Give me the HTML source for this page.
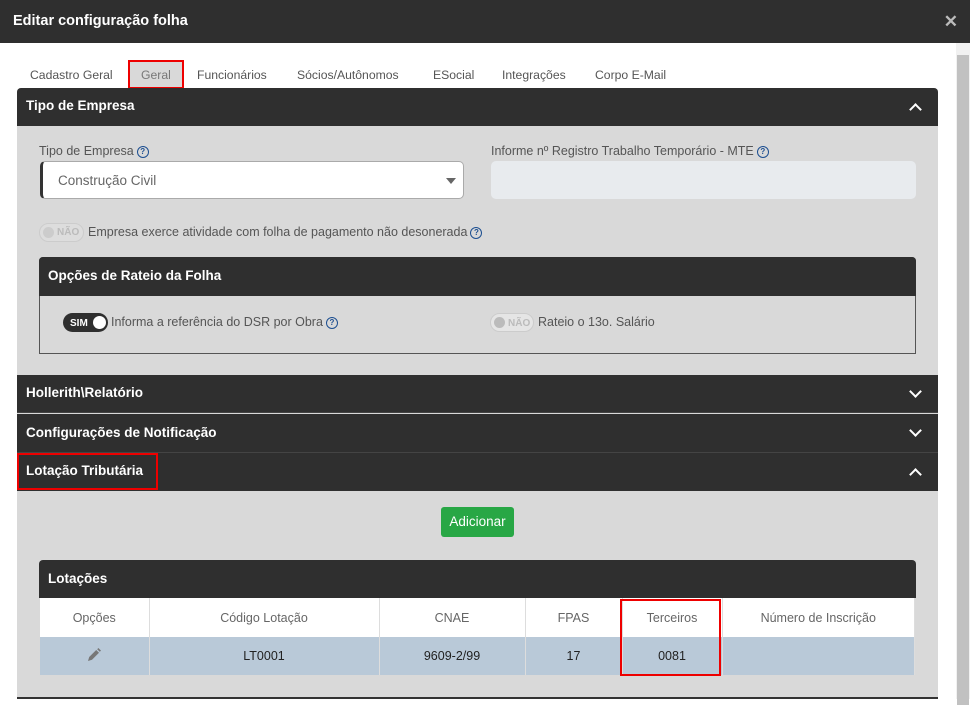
<!DOCTYPE html><html><head><meta charset="utf-8"><style>
*{box-sizing:border-box;margin:0;padding:0}
body{width:970px;height:699px;overflow:hidden;background:#fff;font-family:"Liberation Sans",Arial,sans-serif;position:relative;font-size:12.5px;color:#555}
.a{position:absolute}
.hdr{background:#2f2f2f;color:#fff;font-weight:bold}
.q{display:inline-block;width:12px;height:12px;border:1.3px solid #1d4f91;border-radius:50%;font-size:8px;line-height:9px;text-align:center;color:#1d4f91;font-weight:bold;vertical-align:middle;margin-left:3px}
.chev{position:absolute;right:18px;top:14px;width:9px;height:9px;border-left:2.5px solid #fff;border-top:2.5px solid #fff}
.up{transform:rotate(45deg);top:17px}
.dn{transform:rotate(225deg);top:12px}
.tog{position:absolute;height:19px;border-radius:10px;font-size:10px;font-weight:bold}
td,th{border-right:1px solid #ddd;text-align:center;font-weight:normal}
</style></head><body>
<div class="a hdr" style="left:0;top:0;width:970px;height:43px;font-size:14.5px;padding:13px 13px">Editar configuração folha<span class="a" style="right:12px;top:12px;color:#bbb;font-size:17px">✕</span></div>
<div class="a" style="left:956px;top:43px;width:14px;height:656px;background:#f1f1f1"><div style="margin:12px 1px 0;height:650px;background:#c1c1c1"></div></div>
<div class="a" style="left:128px;top:60px;width:56px;height:29px;background:#d9d9d9;border:2px solid #e00"></div>
<div class="a" style="top:68px;left:0;font-size:12.2px;color:#555;white-space:nowrap">
<span class="a" style="left:30px">Cadastro Geral</span><span class="a" style="left:141px;color:#777">Geral</span><span class="a" style="left:197px">Funcionários</span><span class="a" style="left:297px">Sócios/Autônomos</span><span class="a" style="left:433px">ESocial</span><span class="a" style="left:502px">Integrações</span><span class="a" style="left:595px">Corpo E-Mail</span></div>
<div class="a" style="left:17px;top:88px;width:921px;height:610px;background:#d9d9d9;border-radius:4px 4px 0 0"></div>
<div class="a hdr" style="left:17px;top:88px;width:921px;height:38px;font-size:13.5px;padding:10px 9px;border-radius:4px 4px 0 0">Tipo de Empresa<i class="chev up"></i></div>
<div class="a" style="left:39px;top:144px">Tipo de Empresa<span class="q">?</span></div>
<div class="a" style="left:40px;top:161px;width:424px;height:38px;background:#fff;border:1px solid #aaa;border-left:3px solid #333;border-radius:5px;padding:11px 15px;font-size:13.5px;color:#666">Construção Civil<span class="a" style="right:7px;top:16px;border:5px solid transparent;border-top:6px solid #666"></span></div>
<div class="a" style="left:491px;top:144px">Informe nº Registro Trabalho Temporário - MTE<span class="q">?</span></div>
<div class="a" style="left:491px;top:161px;width:425px;height:38px;background:#e8ebee;border-radius:5px"></div>
<div class="tog" style="left:39px;top:223px;width:45px;border:1px solid #ccc;background:#ddd;color:#bbb;padding:3px 0 0 17px">NÃO<i class="a" style="left:3px;top:3px;width:11px;height:11px;border-radius:50%;background:#ccc"></i></div>
<div class="a" style="left:88px;top:225px">Empresa exerce atividade com folha de pagamento não desonerada<span class="q">?</span></div>
<div class="a" style="left:39px;top:257px;width:877px;height:97px;border:1px solid #555;border-radius:4px 4px 0 0"></div>
<div class="a hdr" style="left:39px;top:257px;width:877px;height:39px;font-size:13.5px;padding:11px 9px;border-radius:4px 4px 0 0">Opções de Rateio da Folha</div>
<div class="tog" style="left:63px;top:313px;width:45px;background:#2f2f2f;color:#fff;padding:5px 0 0 7px">SIM<i class="a" style="right:2px;top:3px;width:13px;height:13px;border-radius:50%;background:#fff"></i></div>
<div class="a" style="left:111px;top:315px">Informa a referência do DSR por Obra<span class="q">?</span></div>
<div class="tog" style="left:490px;top:313px;width:44px;border:1px solid #ccc;background:#e5e5e5;color:#bbb;padding:4px 0 0 17px">NÃO<i class="a" style="left:3px;top:3px;width:11px;height:11px;border-radius:50%;background:#bbb"></i></div>
<div class="a" style="left:538px;top:315px">Rateio o 13o. Salário</div>
<div class="a hdr" style="left:17px;top:375px;width:921px;height:38px;font-size:13.5px;padding:10px 9px;border-bottom:1px solid #444">Hollerith\Relatório<i class="chev dn"></i></div>
<div class="a hdr" style="left:17px;top:414px;width:921px;height:39px;font-size:13.5px;padding:11px 9px;border-bottom:1px solid #444">Configurações de Notificação<i class="chev dn"></i></div>
<div class="a hdr" style="left:17px;top:453px;width:921px;height:38px;font-size:13.5px;padding:10px 9px">Lotação Tributária<i class="chev up"></i></div>
<div class="a" style="left:17px;top:453px;width:141px;height:37px;border:2px solid #e00"></div>
<div class="a" style="left:441px;top:507px;width:73px;height:30px;background:#28a745;border-radius:3px;color:#fff;font-size:13.5px;text-align:center;line-height:30px">Adicionar</div>
<div class="a hdr" style="left:39px;top:560px;width:877px;height:38px;font-size:13.5px;padding:11px 9px;border-radius:4px 4px 0 0">Lotações</div>
<table class="a" style="left:40px;top:598px;width:875px;border-collapse:collapse;font-size:12.5px">
<tr style="background:#fff;height:39px;color:#666"><th style="width:109px">Opções</th><th style="width:230px">Código Lotação</th><th style="width:146px">CNAE</th><th style="width:97px">FPAS</th><th style="width:100px">Terceiros</th><th>Número de Inscrição</th></tr>
<tr style="background:#b9c9d8;height:38px;color:#222"><td><svg width="16" height="16" viewBox="0 0 16 16"><path d="M2 14l1.2-4 7-7 2.8 2.8-7 7z" fill="#777"/><path d="M11.2 2.2l1.2-1.2 2.6 2.6-1.2 1.2z" fill="#777"/></svg></td><td>LT0001</td><td>9609-2/99</td><td>17</td><td>0081</td><td></td></tr></table>
<div class="a" style="left:620px;top:599px;width:101px;height:77px;border:2px solid #e00"></div>
<div class="a" style="left:17px;top:697px;width:921px;height:2px;background:#333"></div>
</body></html>
